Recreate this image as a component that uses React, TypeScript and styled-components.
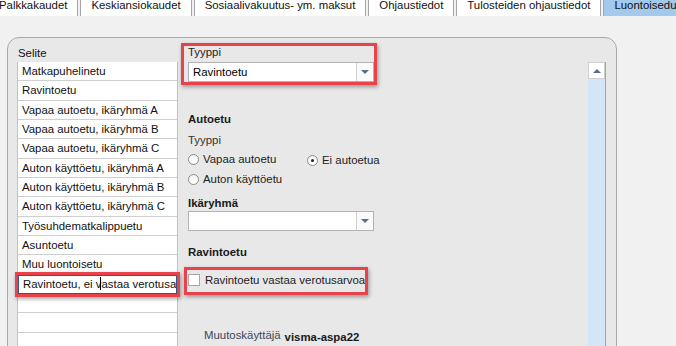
import React from "react";
import styled, { createGlobalStyle } from "styled-components";

const Global = createGlobalStyle`
  html, body { margin: 0; padding: 0; background: #f1f1f1; overflow: hidden; }
  body { font-family: "Liberation Sans", Arial, sans-serif; font-size: 11.4px; color: #111; }
  * { box-sizing: border-box; }
`;

const Page = styled.div`
  width: 676px;
  height: 346px;
  overflow: hidden;
`;

const TabBar = styled.div`
  display: flex;
  align-items: flex-end;
  gap: 2px;
  height: 16px;
  margin-left: -12px;
  white-space: nowrap;
`;

const Tab = styled.div<{ $active?: boolean }>`
  flex: none;
  padding: 0 10px 4px;
  line-height: 13px;
  background: ${(p) => (p.$active ? "#a3c9ec" : "#ffffff")};
  border-left: 1px solid #a6a6a6;
  border-right: 1px solid #a6a6a6;
  color: #111;
`;

const Panel = styled.div`
  margin: 21px 0 0 7px;
  width: 610px;
  height: 360px;
  border: 1px solid #a9a9a9;
  border-radius: 12px 12px 0 0;
  background: #e8e8e8;
  display: flex;
  align-items: flex-start;
  padding: 0 10px 0 9px;
`;

const LeftCol = styled.div`
  width: 161px;
  flex: none;
  padding-top: 8px;
`;

const Label = styled.div`
  line-height: 14px;
  padding-left: 1px;
  color: #111;
`;

const List = styled.div`
  margin-top: 2px;
  border-left: 1px solid #c2c2c2;
  border-right: 1px solid #c2c2c2;
  background: #ffffff;
`;

const Row = styled.div`
  height: 19.33px;
  line-height: 18px;
  padding-left: 4px;
  border-bottom: 1px solid #cfcfcf;
  background: #fff;
  white-space: nowrap;
  overflow: hidden;
`;

const Annotated = styled.div`
  position: relative;
`;

const RedBox = styled.div<{ $t: number; $l: number; $r?: number; $b: number; $w?: number }>`
  position: absolute;
  top: ${(p) => p.$t}px;
  left: ${(p) => p.$l}px;
  bottom: ${(p) => p.$b}px;
  ${(p) => (p.$w !== undefined ? `width: ${p.$w}px;` : `right: ${p.$r}px;`)}
  border: 3px solid #e8434b;
  box-shadow: 1px 2px 4px rgba(0, 0, 0, 0.35);
  pointer-events: none;
`;

const EditRow = styled.div`
  height: 19.33px;
  line-height: 17px;
  padding-left: 4px;
  border: 1px solid #2a5b8c;
  background: #fff;
  white-space: nowrap;
  overflow: hidden;
`;

const Caret = styled.span`
  display: inline-block;
  width: 0;
  height: 13px;
  vertical-align: -2px;
  border-left: 1px solid #000;
  margin-left: -2px;
  margin-right: 1px;
`;

const FormCol = styled.div`
  width: 400px;
  flex: none;
  margin-left: 10px;
  padding-top: 7px;
  display: flex;
  flex-direction: column;
  align-items: flex-start;
`;

const FieldLabel = styled.div`
  line-height: 14px;
  color: #222;
`;

const Heading = styled.div<{ $mt: number }>`
  margin-top: ${(p) => p.$mt}px;
  line-height: 14px;
  font-weight: bold;
  color: #1a1a1a;
`;

const SubLabel = styled.div<{ $mt: number }>`
  margin-top: ${(p) => p.$mt}px;
  line-height: 14px;
  color: #333;
`;

const Select = styled.div<{ $mt: number }>`
  margin-top: ${(p) => p.$mt}px;
  width: 186px;
  height: 20px;
  display: flex;
  border: 1px solid #b3b3b3;
  background: #fff;
`;

const SelectValue = styled.div`
  flex: 1;
  line-height: 18px;
  padding-left: 4px;
  color: #000;
`;

const SelectButton = styled.div`
  width: 17px;
  border-left: 1px solid #cfcfcf;
  display: flex;
  align-items: center;
  justify-content: center;
  background: #fafafa;
`;

const DownArrow = styled.div`
  width: 0;
  height: 0;
  border-left: 4px solid transparent;
  border-right: 4px solid transparent;
  border-top: 4px solid #5d6c84;
`;

const RadioGrid = styled.div<{ $mt: number }>`
  margin-top: ${(p) => p.$mt}px;
  display: grid;
  grid-template-columns: 119px auto;
  height: 16px;
  align-items: center;
`;

const RadioItem = styled.label<{ $dy?: number }>`
  display: flex;
  align-items: center;
  gap: 4px;
  line-height: 14px;
  color: #222;
  position: relative;
  top: ${(p) => p.$dy ?? 0}px;
`;

const RadioCircle = styled.span<{ $checked?: boolean }>`
  width: 11px;
  height: 11px;
  border-radius: 50%;
  border: 1px solid #8c8c8c;
  background: linear-gradient(#f4f4f4, #ffffff);
  display: flex;
  align-items: center;
  justify-content: center;
  &::after {
    content: "";
    width: 3px;
    height: 3px;
    border-radius: 50%;
    background: ${(p) => (p.$checked ? "#222" : "transparent")};
  }
`;

const CheckRow = styled.div<{ $mt: number }>`
  margin-top: ${(p) => p.$mt}px;
  height: 16px;
  display: flex;
  align-items: center;
  gap: 5px;
  color: #222;
  white-space: nowrap;
`;

const CheckBox = styled.span`
  width: 12px;
  height: 12px;
  border: 1px solid #a8a8a8;
  background: #fff;
`;

const Meta = styled.div<{ $mt: number }>`
  margin-top: ${(p) => p.$mt}px;
  padding-left: 16px;
  display: flex;
  align-items: baseline;
  gap: 4px;
  white-space: nowrap;
`;

const MetaKey = styled.span`
  color: #3b475a;
  position: relative;
  top: -2px;
`;

const MetaValue = styled.span`
  font-weight: bold;
  color: #1a1a1a;
`;

const Scrollbar = styled.div`
  width: 18px;
  flex: none;
  margin-top: 24px;
  height: 330px;
  display: flex;
  flex-direction: column;
  border-right: 1px solid #a4a4a4;
`;

const ScrollUp = styled.div`
  height: 17px;
  background: #fff;
  border: 1px solid #d0d0d0;
  display: flex;
  align-items: center;
  justify-content: center;
`;

const UpArrow = styled.div`
  width: 0;
  height: 0;
  border-left: 4px solid transparent;
  border-right: 4px solid transparent;
  border-bottom: 4px solid #5d6c84;
`;

const ScrollTrack = styled.div`
  flex: 1;
  background: #d4e6f6;
`;

const tabs = [
  "Palkkakaudet",
  "Keskiansiokaudet",
  "Sosiaalivakuutus- ym. maksut",
  "Ohjaustiedot",
  "Tulosteiden ohjaustiedot",
];

const items = [
  "Matkapuhelinetu",
  "Ravintoetu",
  "Vapaa autoetu, ikäryhmä A",
  "Vapaa autoetu, ikäryhmä B",
  "Vapaa autoetu, ikäryhmä C",
  "Auton käyttöetu, ikäryhmä A",
  "Auton käyttöetu, ikäryhmä B",
  "Auton käyttöetu, ikäryhmä C",
  "Työsuhdematkalippuetu",
  "Asuntoetu",
  "Muu luontoisetu",
];

export default function App() {
  return (
    <Page>
      <Global />
      <TabBar>
        {tabs.map((t) => (
          <Tab key={t}>{t}</Tab>
        ))}
        <Tab $active>Luontoisedut</Tab>
      </TabBar>
      <Panel>
        <LeftCol>
          <Label>Selite</Label>
          <List>
            {items.map((it) => (
              <Row key={it}>{it}</Row>
            ))}
            <Annotated>
              <EditRow>
                Ravintoetu, ei v<Caret />astaa verotusarvoa
              </EditRow>
              <RedBox $t={-3} $l={-3} $r={-3} $b={-3} />
            </Annotated>
            <Row />
            <Row />
            <Row />
          </List>
        </LeftCol>
        <FormCol>
          <Annotated>
            <FieldLabel>Tyyppi</FieldLabel>
            <Select $mt={3}>
              <SelectValue>Ravintoetu</SelectValue>
              <SelectButton>
                <DownArrow />
              </SelectButton>
            </Select>
            <RedBox $t={-2} $l={-7} $r={-3} $b={-3} />
          </Annotated>
          <Heading $mt={30}>Autoetu</Heading>
          <SubLabel $mt={7}>Tyyppi</SubLabel>
          <RadioGrid $mt={4}>
            <RadioItem>
              <RadioCircle />
              Vapaa autoetu
            </RadioItem>
            <RadioItem $dy={1}>
              <RadioCircle $checked />
              Ei autoetua
            </RadioItem>
          </RadioGrid>
          <RadioGrid $mt={4}>
            <RadioItem>
              <RadioCircle />
              Auton käyttöetu
            </RadioItem>
          </RadioGrid>
          <Heading $mt={9}>Ikäryhmä</Heading>
          <Select $mt={1}>
            <SelectValue />
            <SelectButton>
              <DownArrow />
            </SelectButton>
          </Select>
          <Heading $mt={14}>Ravintoetu</Heading>
          <Annotated>
            <CheckRow $mt={13}>
              <CheckBox />
              Ravintoetu vastaa verotusarvoa
            </CheckRow>
            <RedBox $t={8} $l={-4} $w={184} $b={-7} />
          </Annotated>
          <Meta $mt={43}>
            <MetaKey>Muutoskäyttäjä</MetaKey>
            <MetaValue>visma-aspa22</MetaValue>
          </Meta>
        </FormCol>
        <Scrollbar>
          <ScrollUp>
            <UpArrow />
          </ScrollUp>
          <ScrollTrack />
        </Scrollbar>
      </Panel>
    </Page>
  );
}
